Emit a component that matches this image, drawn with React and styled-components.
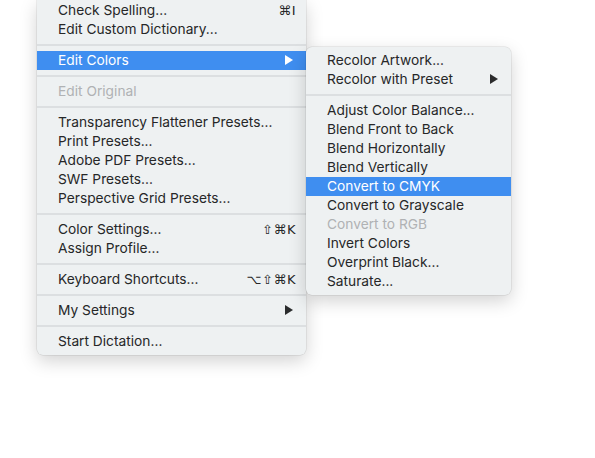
import styled, { createGlobalStyle } from "styled-components";

const GlobalStyle = createGlobalStyle`
  html, body {
    margin: 0;
    padding: 0;
    background: #ffffff;
  }
  body {
    font-family: Inter, "Noto Sans", "DejaVu Sans", sans-serif;
    -webkit-font-smoothing: antialiased;
  }
`;

const Stage = styled.div`
  width: 595px;
  height: 458px;
  display: flex;
  align-items: flex-start;
  padding-left: 37px;
  box-sizing: border-box;
  overflow: hidden;
`;

const Menu = styled.div`
  position: relative;
  width: ${({ width }) => width}px;
  margin-top: ${({ top }) => top ?? 0}px;
  padding: ${({ padTop }) => padTop ?? 4}px 0 4px;
  background: #eef1f2;
  border-radius: ${({ cutTop }) => (cutTop ? "0 0 6px 6px" : "6px")};
  box-shadow: 0 0 0 0.5px rgba(0, 0, 0, 0.12), 0 6px 18px rgba(0, 0, 0, 0.18);
  box-sizing: border-box;
  z-index: ${({ layer }) => layer ?? 1};
`;

const Row = styled.div`
  height: 19px;
  display: flex;
  align-items: center;
  justify-content: space-between;
  padding: 0 ${({ arrow }) => (arrow ? 13 : 10)}px 0 21px;
  font-size: 13.75px;
  color: ${({ disabled, active }) =>
    active ? "#ffffff" : disabled ? "#b0b2b4" : "#262728"};
  background: ${({ active }) => (active ? "#3f8ef0" : "transparent")};
  white-space: nowrap;
`;

const Shortcut = styled.span`
  font-family: "DejaVu Sans", sans-serif;
  font-size: 13px;
  letter-spacing: 0.5px;
  color: inherit;
`;

const Arrow = styled.span`
  width: 0;
  height: 0;
  border-top: 5px solid transparent;
  border-bottom: 5px solid transparent;
  border-left: 8px solid ${({ active }) => (active ? "#ffffff" : "#2b2c2d")};
`;

const Separator = styled.div`
  height: 12px;
  display: flex;
  align-items: center;
  &::after {
    content: "";
    flex: 1;
    height: 2px;
    background: #dcdfe1;
  }
`;

const mainItems = [
  { label: "Check Spelling...", shortcut: "⌘I" },
  { label: "Edit Custom Dictionary..." },
  "sep",
  { label: "Edit Colors", arrow: true, active: true },
  "sep",
  { label: "Edit Original", disabled: true },
  "sep",
  { label: "Transparency Flattener Presets..." },
  { label: "Print Presets..." },
  { label: "Adobe PDF Presets..." },
  { label: "SWF Presets..." },
  { label: "Perspective Grid Presets..." },
  "sep",
  { label: "Color Settings...", shortcut: "⇧⌘K" },
  { label: "Assign Profile..." },
  "sep",
  { label: "Keyboard Shortcuts...", shortcut: "⌥⇧⌘K" },
  "sep",
  { label: "My Settings", arrow: true },
  "sep",
  { label: "Start Dictation..." },
];

const subItems = [
  { label: "Recolor Artwork..." },
  { label: "Recolor with Preset", arrow: true },
  "sep",
  { label: "Adjust Color Balance..." },
  { label: "Blend Front to Back" },
  { label: "Blend Horizontally" },
  { label: "Blend Vertically" },
  { label: "Convert to CMYK", active: true },
  { label: "Convert to Grayscale" },
  { label: "Convert to RGB", disabled: true },
  { label: "Invert Colors" },
  { label: "Overprint Black..." },
  { label: "Saturate..." },
];

const MenuItems = ({ items }) =>
  items.map((item, i) =>
    item === "sep" ? (
      <Separator key={i} />
    ) : (
      <Row
        key={i}
        arrow={item.arrow}
        active={item.active}
        disabled={item.disabled}
      >
        <span>{item.label}</span>
        {item.shortcut && <Shortcut>{item.shortcut}</Shortcut>}
        {item.arrow && <Arrow active={item.active} />}
      </Row>
    )
  );

export default function App() {
  return (
    <>
      <GlobalStyle />
      <Stage>
        <Menu width={269} padTop={0.5} cutTop>
          <MenuItems items={mainItems} />
        </Menu>
        <Menu width={205} top={46.5} layer={2}>
          <MenuItems items={subItems} />
        </Menu>
      </Stage>
    </>
  );
}
